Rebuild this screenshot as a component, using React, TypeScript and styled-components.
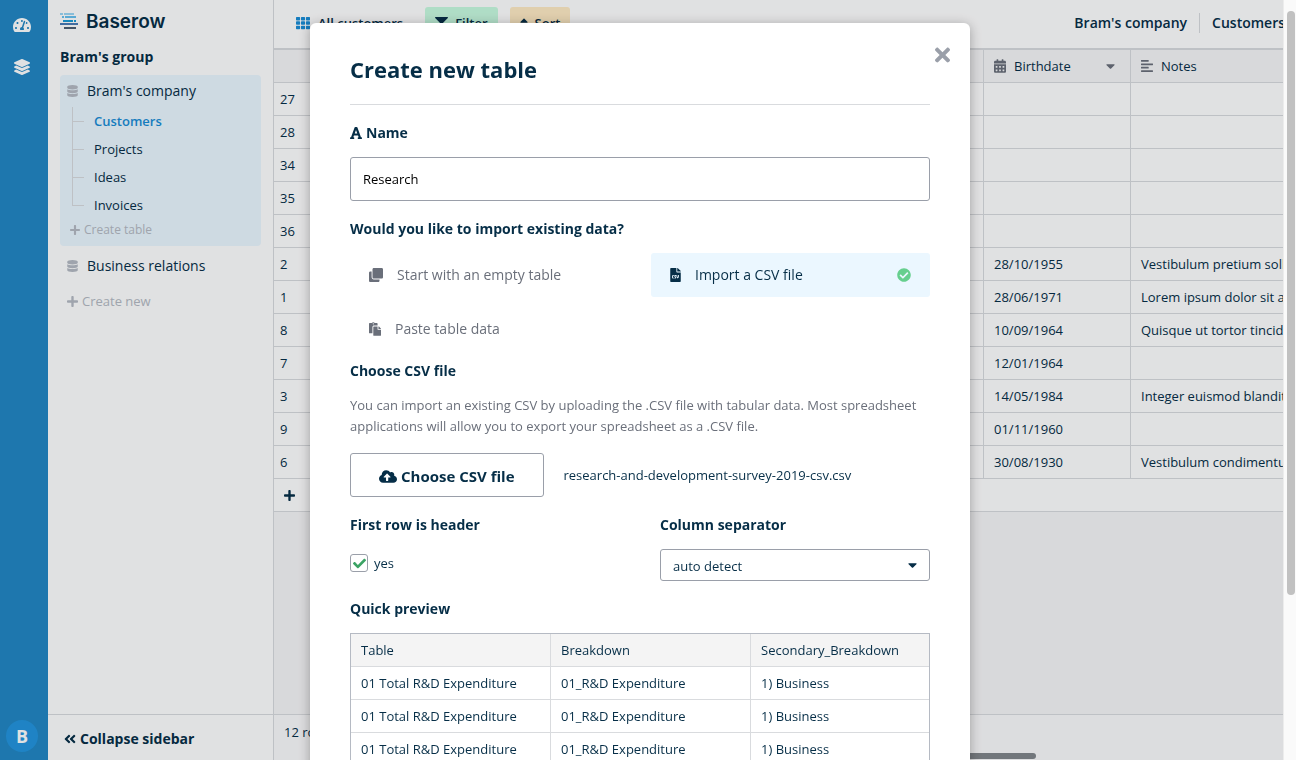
import React from 'react';
import styled, { createGlobalStyle, css } from 'styled-components';
import {
  FaAlignLeft,
  FaAngleDoubleLeft,
  FaCalendarAlt,
  FaCaretDown,
  FaCheck,
  FaCheckCircle,
  FaClone,
  FaCloudUploadAlt,
  FaDatabase,
  FaFileCsv,
  FaFilter,
  FaFont,
  FaLayerGroup,
  FaPaste,
  FaPlus,
  FaSort,
  FaTachometerAlt,
  FaTh,
  FaTimes,
} from 'react-icons/fa';

const ink = '#062e47';
const line = '#d9dbde';
const muted = '#b5bac3';
const slate = '#6a6f7a';

const GlobalStyle = createGlobalStyle`
  *, *::before, *::after { box-sizing: border-box; }
  body {
    margin: 0;
    overflow: hidden;
    color: ${ink};
    font: 13px/20px "Open Sans", "Noto Sans", sans-serif;
  }
  button, input, select { font: inherit; color: inherit; }
  button { padding: 0; border: 0; background: none; cursor: pointer; }
  a { color: inherit; text-decoration: none; }
  ul, h1, h2, p { margin: 0; padding: 0; }
  ul { list-style: none; }
  svg { display: block; flex: none; }
`;

/* Font Awesome glyphs differ in width, so each use gives its own box */
const Icon = styled.svg<{ $w: number; $h: number }>`
  width: ${(p) => p.$w}px;
  height: ${(p) => p.$h}px;
`;

/* Application shell */

const Shell = styled.div`
  display: flex;
  height: 100vh;
  overflow: hidden;
`;

const Rail = styled.nav`
  display: flex;
  flex: none;
  flex-direction: column;
  align-items: center;
  width: 48px;
  padding: 4px 4px 8px 0;
  background: #2387c4;
  color: #fff;
`;

const RailLink = styled.a`
  display: flex;
  align-items: center;
  justify-content: center;
  width: 32px;
  height: 42px;
`;

const Avatar = styled.button`
  width: 32px;
  height: 32px;
  margin-top: auto;
  border-radius: 50%;
  background: #2495de;
  color: #fff;
  font-size: 18px;
  font-weight: 700;
`;

const Sidebar = styled.aside`
  display: flex;
  flex: none;
  flex-direction: column;
  width: 226px;
  border-right: 1px solid ${line};
  background: #fff;
`;

const SidebarBody = styled.div`
  flex: 1;
  padding: 11px 12px 0;
`;

const Brand = styled.a`
  display: flex;
  align-items: center;
  gap: 8px;
  height: 20px;
  font: 600 19px/20px Inter, "Open Sans", sans-serif;
`;

const Wordmark = styled.span`
  padding-top: 2px;
`;

const GroupTitle = styled.h2`
  margin: 16px 0 8px;
  font-size: 14px;
  line-height: 20px;
  font-weight: 700;
`;

const Application = styled.section<{ $open?: boolean }>`
  padding: 0 7px;
  border-radius: 4px;
  ${(p) => p.$open && css`
    padding-bottom: 6px;
    margin-bottom: 4px;
    background: #ebf7ff;
  `}
`;

const ApplicationLink = styled.a`
  display: flex;
  align-items: center;
  gap: 9px;
  height: 32px;
  font-size: 14px;
  svg { color: ${muted}; }
`;

const Tree = styled.ul`
  margin-left: 5px;
`;

const TreeItem = styled.li<{ $active?: boolean }>`
  display: flex;
  height: 28px;
  line-height: 28px;
  font-weight: ${(p) => (p.$active ? 600 : 400)};
  color: ${(p) => (p.$active ? '#198dd6' : ink)};

  &::before {
    content: '';
    width: 12px;
    height: 15px;
    margin-right: 10px;
    border-left: 1px solid ${line};
    border-bottom: 1px solid ${line};
  }
  &:not(:last-child) {
    background: linear-gradient(${line}, ${line}) left / 1px 100% no-repeat;
  }
`;

const CreateLink = styled.button<{ $small?: boolean }>`
  display: flex;
  align-items: center;
  gap: 4px;
  height: 20px;
  margin: ${(p) => (p.$small ? '1px 0 0 3px' : '9px 0 0 7px')};
  color: ${muted};
  font-size: ${(p) => (p.$small ? 12 : 13)}px;
`;

const Collapse = styled.button`
  display: flex;
  align-items: center;
  gap: 4px;
  height: 46px;
  padding: 2px 16px 0;
  border-top: 1px solid ${line};
  font-weight: 700;
  font-size: 14px;
`;

/* Grid view */

const Main = styled.main`
  display: flex;
  flex: 1;
  flex-direction: column;
  min-width: 0;
  background: #f6f6f7;
`;

const Header = styled.header`
  display: flex;
  align-items: center;
  height: 50px;
  padding: 0 11px 2px 22px;
  border-bottom: 2px solid ${line};
  background: #fff;
  font-weight: 600;
`;

const ViewName = styled.button`
  display: flex;
  align-items: center;
  gap: 8px;
  margin-right: 22px;
  font-weight: 600;
  svg { color: #198dd6; }
`;

const Tool = styled.button<{ $tone: string }>`
  display: flex;
  align-items: center;
  gap: 7px;
  height: 32px;
  margin-right: 12px;
  padding: 0 10px;
  border-radius: 3px;
  background: ${(p) => p.$tone};
  font-weight: 600;
`;

const Crumbs = styled.nav`
  display: flex;
  margin-left: auto;
  font-size: 14px;
  a + a {
    margin-left: 12px;
    padding-left: 12px;
    border-left: 1px solid ${line};
  }
`;

const Grid = styled.table`
  width: 100%;
  table-layout: fixed;
  border-collapse: separate;
  border-spacing: 0;
  background: #fff;

  th, td {
    height: 33px;
    padding: 0 10px;
    border-bottom: 1px solid ${line};
    overflow: hidden;
    white-space: nowrap;
    font-weight: 400;
    text-align: left;
  }
  th { background: #f6f6f7; }
  td:first-child { padding-left: 6px; }
  tr > :nth-child(2), tr > :nth-child(3) { border-right: 1px solid ${line}; }
`;

const Column = styled.col<{ $width?: number }>`
  width: ${(p) => (p.$width ? `${p.$width}px` : 'auto')};
`;

const Field = styled.span`
  display: flex;
  align-items: center;
  gap: 8px;
  svg { color: ${slate}; }
  svg:nth-child(2) { margin: 0 5px 0 auto; }
`;

const AddRow = styled.button`
  display: flex;
  align-items: center;
  height: 33px;
  padding: 0 10px;
  border-bottom: 1px solid ${line};
  background: #fff;
`;

const GridFooter = styled.footer`
  position: relative;
  height: 46px;
  margin-top: auto;
  padding: 7px 10px;
  border-top: 1px solid ${line};
  background: #fbfbfc;
`;

const GridScroll = styled.div`
  position: absolute;
  left: 40%;
  right: 260px;
  bottom: 1px;
  height: 6px;
  border-radius: 3px;
  background: #82878b;
`;

/* Dialog */

const Overlay = styled.div`
  position: fixed;
  inset: 0;
  display: flex;
  background: rgba(0, 10, 20, 0.12);
`;

const OverlayScroll = styled.div`
  flex: 1;
  padding: 23px 3px 23px 0;
  overflow-y: auto;
  scrollbar-width: none;
`;

const ScrollTrack = styled.div`
  flex: none;
  width: 13px;
  padding: 11px 1px 0 3px;
  border-left: 1px solid #ececec;
  background: #fafafa;
  &::before {
    content: '';
    display: block;
    height: 78%;
    border-radius: 4px;
    background: #c1c1c1;
  }
`;

const Dialog = styled.form`
  max-width: 660px;
  margin: 0 auto;
  padding: 32px 40px 40px;
  border-radius: 6px;
  background: #fff;
  box-shadow: 0 2px 12px rgba(0, 0, 0, 0.3);
`;

const DialogHead = styled.div`
  display: flex;
  justify-content: space-between;
  padding-bottom: 21px;
  margin-bottom: 18px;
  border-bottom: 1px solid ${line};
`;

const DialogTitle = styled.h1`
  font-size: 22px;
  line-height: 28px;
  font-weight: 700;
`;

const Close = styled.button`
  align-self: flex-start;
  margin: -11px -20px 0 0;
  color: #9a9fa9;
`;

const labelStyle = css`
  display: flex;
  align-items: center;
  gap: 4px;
  margin-bottom: 14px;
  font-size: 14px;
  line-height: 20px;
  font-weight: 700;
`;

const Label = styled.label`
  ${labelStyle}
`;

const SectionTitle = styled.h2`
  && { ${labelStyle} }
`;

const Block = styled.div<{ $tight?: boolean }>`
  margin-bottom: ${(p) => (p.$tight ? 10 : 18)}px;
`;

const TextInput = styled.input`
  display: block;
  width: 100%;
  height: 44px;
  padding: 0 12px;
  border: 1px solid #9a9fa9;
  border-radius: 3px;
  color: #000;
`;

const Choices = styled.div`
  display: grid;
  grid-template-columns: 1fr 1fr;
  gap: 10px 22px;
`;

const Choice = styled.button<{ $active?: boolean }>`
  display: flex;
  align-items: center;
  gap: 14px;
  height: 44px;
  padding: 0 19px;
  border-radius: 3px;
  background: ${(p) => (p.$active ? '#ebf7ff' : 'none')};
  color: ${(p) => (p.$active ? ink : slate)};
  font-size: 14px;
  svg:nth-child(2) { margin-left: auto; color: #66cf8e; }
`;

const Description = styled.p`
  margin-bottom: 16px;
  color: ${slate};
  line-height: 21px;
`;

const Upload = styled.div`
  display: flex;
  align-items: center;
  gap: 20px;
`;

const UploadButton = styled.button`
  display: flex;
  align-items: center;
  gap: 4px;
  height: 44px;
  padding: 2px 28px 0;
  border: 1px solid #9a9fa9;
  border-radius: 3px;
  font-size: 15px;
  font-weight: 700;
`;

const Pair = styled(Block)`
  display: grid;
  grid-template-columns: 1fr 1fr;
  gap: 40px;
`;

const CheckLabel = styled.label`
  display: flex;
  align-items: center;
  gap: 6px;
  height: 28px;
`;

const CheckBox = styled.span`
  display: grid;
  place-items: center;
  width: 18px;
  height: 18px;
  color: #3ba364;
  > * { grid-area: 1 / 1; }
  input {
    appearance: none;
    width: 18px;
    height: 18px;
    margin: 0;
    border: 1px solid #9a9fa9;
    border-radius: 3px;
  }
  svg { pointer-events: none; }
  input:not(:checked) + svg { visibility: hidden; }
`;

const SelectBox = styled.div`
  display: grid;
  align-items: center;
  > * { grid-area: 1 / 1; }
  select {
    appearance: none;
    width: 100%;
    height: 32px;
    padding: 2px 12px 0;
    border: 1px solid #9a9fa9;
    border-radius: 3px;
    background: #fff;
  }
  svg { justify-self: end; margin-right: 13px; pointer-events: none; }
`;

const Preview = styled.table`
  width: 100%;
  table-layout: fixed;
  border: 1px solid #b5bac3;
  border-spacing: 0;

  th, td {
    height: 33px;
    padding: 0 10px;
    border-bottom: 1px solid ${line};
    text-align: left;
    font-weight: 400;
    white-space: nowrap;
  }
  th { background: #f4f4f4; }
  tr > :not(:last-child) { border-right: 1px solid ${line}; }
  th:nth-child(-n + 2) { width: 200px; }
`;

const rows: [number, string, string][] = [
  [27, '', ''],
  [28, '', ''],
  [34, '', ''],
  [35, '', ''],
  [36, '', ''],
  [2, '28/10/1955', 'Vestibulum pretium sollicitudin'],
  [1, '28/06/1971', 'Lorem ipsum dolor sit amet'],
  [8, '10/09/1964', 'Quisque ut tortor tincidunt'],
  [7, '12/01/1964', ''],
  [3, '14/05/1984', 'Integer euismod blandit'],
  [9, '01/11/1960', ''],
  [6, '30/08/1930', 'Vestibulum condimentum'],
];

const previewRows = Array.from({ length: 5 }, () => [
  '01 Total R&D Expenditure',
  '01_R&D Expenditure',
  '1) Business',
]);

const Logo = () => (
  <svg width="18" height="16" viewBox="0 0 18 16" aria-hidden="true">
    <path fill="#9bd6f5" d="M0 0h3v2H0zM4 0h10v2H4z" />
    <path fill="#67c1ef" d="M2 3h2v2H2zM5 3h11v2H5z" />
    <path fill="#1a9ad7" d="M3 7h10v2H3zM14 7h2v2h-2z" />
    <path fill="#4b7cb5" d="M0 10h18v2H0z" />
    <path fill="#4d5f73" d="M4 14h12v2H4z" />
  </svg>
);

export default function App() {
  return (
    <>
      <GlobalStyle />
      <Shell>
        <Rail>
          <RailLink href="#dashboard" aria-label="Dashboard"><Icon as={FaTachometerAlt} $w={18} $h={16} /></RailLink>
          <RailLink href="#groups" aria-label="Groups"><Icon as={FaLayerGroup} $w={16} $h={16} /></RailLink>
          <Avatar type="button">B</Avatar>
        </Rail>

        <Sidebar>
          <SidebarBody>
            <Brand href="#home"><Logo /><Wordmark>Baserow</Wordmark></Brand>
            <GroupTitle>Bram's group</GroupTitle>
            <Application $open>
              <ApplicationLink href="#company"><Icon as={FaDatabase} $w={11} $h={12} />Bram's company</ApplicationLink>
              <Tree>
                <TreeItem $active><a href="#customers">Customers</a></TreeItem>
                <TreeItem><a href="#projects">Projects</a></TreeItem>
                <TreeItem><a href="#ideas">Ideas</a></TreeItem>
                <TreeItem><a href="#invoices">Invoices</a></TreeItem>
              </Tree>
              <CreateLink type="button" $small><Icon as={FaPlus} $w={10} $h={12} />Create table</CreateLink>
            </Application>
            <Application>
              <ApplicationLink href="#relations"><Icon as={FaDatabase} $w={11} $h={12} />Business relations</ApplicationLink>
            </Application>
            <CreateLink type="button"><Icon as={FaPlus} $w={11} $h={13} />Create new</CreateLink>
          </SidebarBody>
          <Collapse type="button"><Icon as={FaAngleDoubleLeft} $w={12} $h={14} />Collapse sidebar</Collapse>
        </Sidebar>

        <Main>
          <Header>
            <ViewName type="button"><Icon as={FaTh} $w={14} $h={14} />All customers</ViewName>
            <Tool type="button" $tone="#c8fbe0"><Icon as={FaFilter} $w={13} $h={13} />Filter</Tool>
            <Tool type="button" $tone="#ffebc4"><Icon as={FaSort} $w={8} $h={13} />Sort</Tool>
            <Crumbs>
              <a href="#company">Bram's company</a>
              <a href="#customers">Customers</a>
            </Crumbs>
          </Header>
          <Grid>
            <colgroup>
              <Column $width={72} />
              <Column />
              <Column $width={147} />
              <Column $width={165} />
            </colgroup>
            <thead>
              <tr>
                <th />
                <th />
                <th>
                  <Field>
                    <Icon as={FaCalendarAlt} $w={12} $h={14} />Birthdate<Icon as={FaCaretDown} $w={9} $h={14} />
                  </Field>
                </th>
                <th><Field><Icon as={FaAlignLeft} $w={12} $h={14} />Notes</Field></th>
              </tr>
            </thead>
            <tbody>
              {rows.map(([id, date, notes]) => (
                <tr key={id}>
                  <td>{id}</td>
                  <td />
                  <td>{date}</td>
                  <td>{notes}</td>
                </tr>
              ))}
            </tbody>
          </Grid>
          <AddRow type="button" aria-label="Add row"><Icon as={FaPlus} $w={11} $h={13} /></AddRow>
          <GridFooter>12 rows<GridScroll /></GridFooter>
        </Main>
      </Shell>

      <Overlay>
        <OverlayScroll>
          <Dialog role="dialog" aria-labelledby="dialog-title">
            <DialogHead>
              <DialogTitle id="dialog-title">Create new table</DialogTitle>
              <Close type="button" aria-label="Close"><Icon as={FaTimes} $w={15} $h={22} /></Close>
            </DialogHead>

            <Block>
              <Label htmlFor="name"><Icon as={FaFont} $w={12} $h={14} />Name</Label>
              <TextInput id="name" defaultValue="Research" />
            </Block>

            <Block $tight>
              <SectionTitle>Would you like to import existing data?</SectionTitle>
              <Choices>
                <Choice type="button"><Icon as={FaClone} $w={14} $h={14} />Start with an empty table</Choice>
                <Choice type="button" $active>
                  <Icon as={FaFileCsv} $w={11} $h={14} />Import a CSV file<Icon as={FaCheckCircle} $w={14} $h={14} />
                </Choice>
                <Choice type="button"><Icon as={FaPaste} $w={12} $h={14} />Paste table data</Choice>
              </Choices>
            </Block>

            <Block>
              <SectionTitle>Choose CSV file</SectionTitle>
              <Description>
                You can import an existing CSV by uploading the .CSV file with tabular data. Most spreadsheet
                applications will allow you to export your spreadsheet as a .CSV file.
              </Description>
              <Upload>
                <UploadButton type="button"><Icon as={FaCloudUploadAlt} $w={18} $h={15} />Choose CSV file</UploadButton>
                <span>research-and-development-survey-2019-csv.csv</span>
              </Upload>
            </Block>

            <Pair>
              <div>
                <SectionTitle>First row is header</SectionTitle>
                <CheckLabel>
                  <CheckBox><input type="checkbox" defaultChecked /><Icon as={FaCheck} $w={13} $h={13} /></CheckBox>
                  yes
                </CheckLabel>
              </div>
              <div>
                <Label htmlFor="separator">Column separator</Label>
                <SelectBox>
                  <select id="separator"><option>auto detect</option></select>
                  <Icon as={FaCaretDown} $w={9} $h={14} />
                </SelectBox>
              </div>
            </Pair>

            <SectionTitle>Quick preview</SectionTitle>
            <Preview>
              <thead>
                <tr><th>Table</th><th>Breakdown</th><th>Secondary_Breakdown</th></tr>
              </thead>
              <tbody>
                {previewRows.map((cells, i) => (
                  <tr key={i}>{cells.map((cell) => <td key={cell}>{cell}</td>)}</tr>
                ))}
              </tbody>
            </Preview>
          </Dialog>
        </OverlayScroll>
        <ScrollTrack />
      </Overlay>
    </>
  );
}
